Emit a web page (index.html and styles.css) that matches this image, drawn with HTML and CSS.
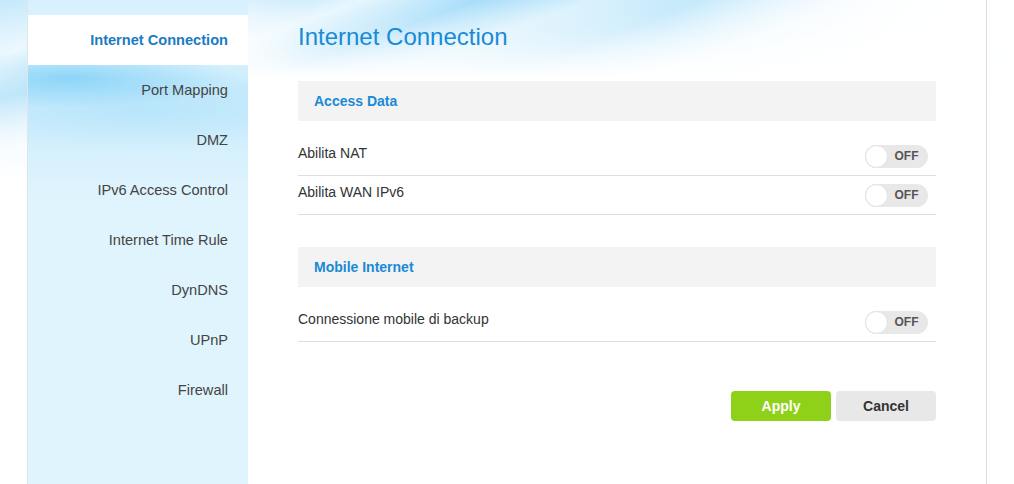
FILE: index.html
```html
<!DOCTYPE html>
<html lang="en">
<head>
    <meta charset="UTF-8">
    <title>Internet Connection</title>
    <link rel="stylesheet" href="styles.css">
</head>
<body>
    <div class="frame">
        <!-- menu laterale -->
        <nav class="sidebar">
            <a class="nav-item active" href="#">Internet Connection</a>
            <a class="nav-item" href="#">Port Mapping</a>
            <a class="nav-item" href="#">DMZ</a>
            <a class="nav-item" href="#">IPv6 Access Control</a>
            <a class="nav-item" href="#">Internet Time Rule</a>
            <a class="nav-item" href="#">DynDNS</a>
            <a class="nav-item" href="#">UPnP</a>
            <a class="nav-item" href="#">Firewall</a>
        </nav>

        <main class="content">
            <h1 class="title">Internet Connection</h1>

            <section class="group">
                <h2 class="group-head">Access Data</h2>
                <div class="row">
                    <span class="label">Abilita NAT</span>
                    <span class="switch"><span class="knob"></span><span class="state">OFF</span></span>
                </div>
                <div class="row">
                    <span class="label">Abilita WAN IPv6</span>
                    <span class="switch"><span class="knob"></span><span class="state">OFF</span></span>
                </div>
            </section>

            <section class="group">
                <h2 class="group-head">Mobile Internet</h2>
                <div class="row">
                    <span class="label">Connessione mobile di backup</span>
                    <span class="switch"><span class="knob"></span><span class="state">OFF</span></span>
                </div>
            </section>

            <div class="actions">
                <button class="btn btn-apply">Apply</button>
                <button class="btn btn-cancel">Cancel</button>
            </div>
        </main>
    </div>
</body>
</html>
```

FILE: styles.css
```css
html, body {
    height: 100%;
}
body {
    margin: 0;
    font-family: "Liberation Sans", Arial, sans-serif;
    color: #333;
    background-color: #fff;
    background-image:
        linear-gradient(to right, rgba(255,255,255,0) 0, rgba(255,255,255,0) 40px, rgba(255,255,255,0.85) 900px, #fff 1014px),
        linear-gradient(to bottom, rgba(255,255,255,0) 0, rgba(255,255,255,0.2) 60px, #fff 180px),
        linear-gradient(165deg, #c4e8fc 0, #e8f7fe 12%, #8fd3f7 22%, #e3f4fd 34%, #b5e2fa 46%, #f2faff 62%, #d5effc 72%, #fff 90%);
    background-size: 100% 180px;
    background-repeat: no-repeat;
}
.frame {
    display: flex;
    width: 958px;
    min-height: 100%;
    margin-left: 27px;
    border-left: 1px solid #dde6ea;
    border-right: 1px solid #dcdcdc;
}

/* menu laterale */
.sidebar {
    width: 220px;
    flex-shrink: 0;
    padding-top: 15px;
    display: flex;
    flex-direction: column;
    background-color: #e0f4fd;
    background-image:
        radial-gradient(ellipse 170px 30px at 40px 78px, rgba(120,205,247,0.75), rgba(120,205,247,0)),
        radial-gradient(ellipse 220px 40px at 110px 110px, rgba(170,224,250,0.6), rgba(170,224,250,0)),
        linear-gradient(to bottom, #d6f0fd 0, #e2f5fd 40px, #c9ebfc 90px, #e0f4fd 200px);
}
.nav-item {
    display: block;
    height: 50px;
    line-height: 50px;
    padding-right: 20px;
    text-align: right;
    font-size: 14.6px;
    color: #444;
    text-decoration: none;
}
.nav-item.active {
    background-color: #fff;
    color: #1b7bc2;
    font-weight: bold;
}

/* contenuto */
.content {
    flex: 1;
    padding: 0 50px 40px;
    background-color: #fff;
    background-image:
        linear-gradient(to bottom, rgba(255,255,255,0) 0, rgba(255,255,255,0.35) 30px, #fff 78px),
        linear-gradient(to right, rgba(255,255,255,0.5) 0, rgba(255,255,255,0) 60px, rgba(255,255,255,0) 420px, rgba(255,255,255,0.85) 640px, #fff 740px),
        linear-gradient(160deg, #b9e4fb 0, #e6f6fe 12%, #a7ddf9 24%, #d9f1fd 36%, #bfe7fb 48%, #eef9ff 64%, #fff 85%);
    background-size: 100% 80px;
    background-repeat: no-repeat;
}
.title {
    margin: 22px 0 29px;
    font-size: 24px;
    line-height: 30px;
    font-weight: normal;
    color: #1a8ad6;
}
.group {
    margin-bottom: 32px;
}
.group-head {
    margin: 0 0 16px;
    height: 40px;
    line-height: 40px;
    padding-left: 16px;
    background-color: #f3f3f3;
    font-size: 14px;
    font-weight: bold;
    color: #1a8ad6;
}
.row {
    display: flex;
    align-items: center;
    justify-content: space-between;
    height: 38px;
    padding-right: 8px;
    border-bottom: 1px solid #dedede;
}
.label {
    font-size: 14px;
    color: #333;
    margin-bottom: 6px;
}

/* interruttore */
.switch {
    display: flex;
    align-items: center;
    width: 63px;
    height: 23px;
    border-radius: 12px;
    background-color: #e8e8e8;
}
.knob {
    width: 21px;
    height: 21px;
    border-radius: 50%;
    background-color: #fff;
    border: 1px solid #e0e0e0;
}
.state {
    flex: 1;
    text-align: center;
    padding-right: 3px;
    font-size: 12px;
    font-weight: bold;
    color: #555;
}

/* pulsanti */
.actions {
    display: flex;
    justify-content: flex-end;
    gap: 5px;
    margin-top: 49px;
}
.btn {
    width: 100px;
    height: 30px;
    border: none;
    border-radius: 4px;
    font-family: "Liberation Sans", Arial, sans-serif;
    font-size: 14px;
    font-weight: bold;
    cursor: pointer;
}
.btn-apply {
    background-color: #8fd118;
    color: #fff;
}
.btn-cancel {
    background-color: #e8e8e8;
    color: #333;
}
```
